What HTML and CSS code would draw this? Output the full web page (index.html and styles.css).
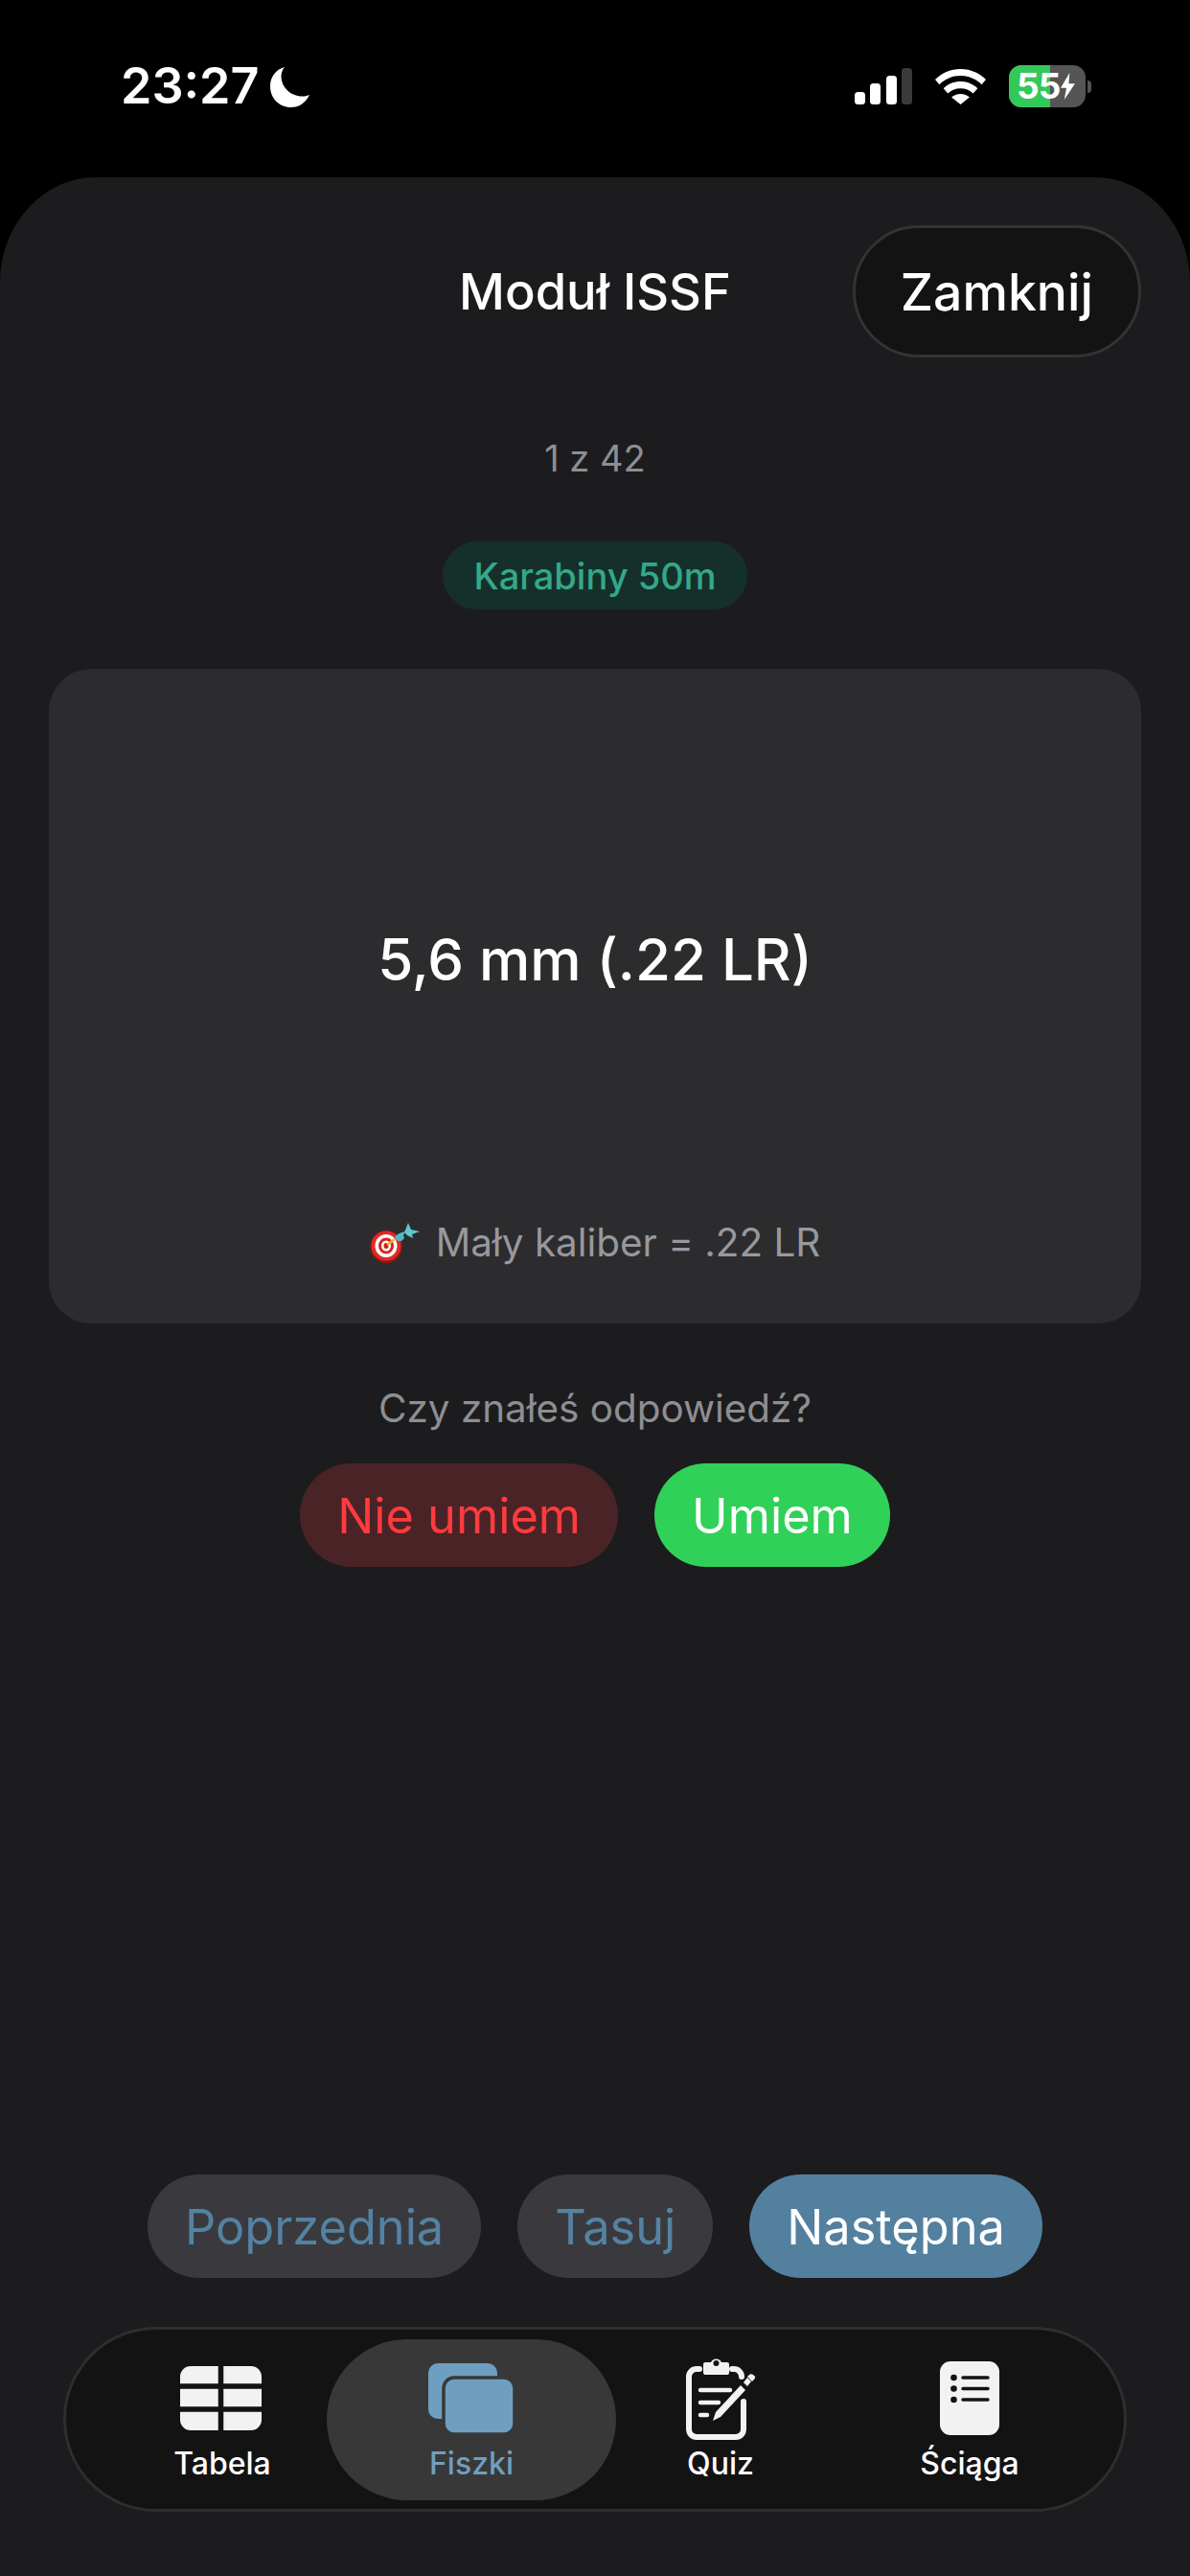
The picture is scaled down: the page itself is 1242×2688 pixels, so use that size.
FILE: index.html
```html
<!DOCTYPE html>
<html lang="pl">
<head>
    <meta charset="UTF-8">
    <title>Moduł ISSF</title>
    <link rel="stylesheet" href="styles.css">
</head>
<body>
    <div class="status-bar">
        <div class="status-left">
            <span class="time">23:27</span>
            <svg class="moon" viewBox="0 0 41 42"><path fill="#fff" d="M15 0C5.500 2.500 0 10.500 0 20c0 12.500 9.500 22 21.500 22 8.500 0 15.500-4.500 19.500-13-1.500.8-4.500 1.500-7.500 1.500C21.500 30.500 11.500 21 11.500 9.500c0-3.500 1.300-7 3.500-9.500z"/></svg>
        </div>
        <div class="status-right">
            <svg class="signal" viewBox="0 0 60 38">
                <rect x="0" y="25" width="11" height="13" rx="3.500" fill="#fff"/>
                <rect x="16" y="16" width="11" height="22" rx="3.500" fill="#fff"/>
                <rect x="33" y="8" width="11" height="30" rx="3.500" fill="#fff"/>
                <rect x="49" y="0" width="11" height="38" rx="3.500" fill="#3a3a3a"/>
            </svg>
            <svg class="wifi" viewBox="0 0 53 37">
                <path fill="#fff" d="M26.500 0C16.500 0 7.500 3.800 0 11l4.500 5.200C10.500 10.300 18 7 26.500 7s16 3.300 22 9.200L53 11C45.500 3.800 36.500 0 26.500 0z"/>
                <path fill="#fff" d="M26.500 13c-6.800 0-12.800 2.500-17.800 7.200l4.600 5.300c3.600-3.400 8.200-5.300 13.200-5.300s9.600 1.900 13.200 5.300l4.600-5.300C39.300 15.500 33.300 13 26.500 13z"/>
                <path fill="#fff" d="M26.500 26c-3.700 0-6.800 1.200-9.400 3.600L26.500 37l9.400-7.400C33.300 27.200 30.200 26 26.500 26z"/>
            </svg>
            <div class="battery">
                <div class="battery-fill"></div>
                <span class="battery-text">55</span>
                <svg class="bolt" viewBox="0 0 16 30"><path fill="#fff" d="M10 0L0 17h6.500L4 30l12-18H9z"/></svg>
            </div>
            <div class="battery-nub"></div>
        </div>
    </div>

    <div class="sheet">
        <div class="sheet-header">
            <div class="sheet-title">Moduł ISSF</div>
            <div class="close-btn">Zamknij</div>
        </div>

        <div class="counter">1 z 42</div>
        <div class="tag">Karabiny 50m</div>

        <div class="card">
            <div class="card-term">5,6 mm (.22 LR)</div>
            <div class="card-hint">
                <svg class="dart" viewBox="0 0 52 43">
                    <ellipse cx="17" cy="26" rx="16.500" ry="17" fill="#9c1512"/>
                    <ellipse cx="17" cy="25" rx="15.500" ry="15.500" fill="#e02a26"/>
                    <ellipse cx="17" cy="25" rx="11.500" ry="12" fill="#fff"/>
                    <ellipse cx="17" cy="25" rx="8" ry="8.500" fill="#d9231f"/>
                    <ellipse cx="17" cy="25" rx="5" ry="5.500" fill="#fff"/>
                    <ellipse cx="17" cy="25" rx="2.500" ry="3" fill="#c8201c"/>
                    <path d="M18 24l8-6" stroke="#e7b92e" stroke-width="2.500"/>
                    <path fill="#4fb8c6" d="M26 16c3-4 7-5 11-6l-2 4 1 3-3 3c-3 1-5 0-7-4z"/>
                    <path fill="#5fc7d3" d="M36 11l4-10 3 7 9 2-8 3 1 4-6-3z"/>
                </svg>
                <span>Mały kaliber = .22 LR</span>
            </div>
        </div>

        <div class="question">Czy znałeś odpowiedź?</div>
        <div class="answers">
            <div class="btn btn-no">Nie umiem</div>
            <div class="btn btn-yes">Umiem</div>
        </div>

        <div class="nav-btns">
            <div class="btn btn-muted">Poprzednia</div>
            <div class="btn btn-muted">Tasuj</div>
            <div class="btn btn-next">Następna</div>
        </div>

        <div class="tab-bar">
            <div class="tab">
                <div class="tab-icon tab-icon-table">
                    <svg width="85" height="67" viewBox="0 0 85 67">
                        <rect width="85" height="67" rx="11" fill="#f2f2f2"/>
                        <path d="M42.500 0V67M0 21H85M0 45H85" stroke="#131314" stroke-width="5.500"/>
                    </svg>
                </div>
                <span class="tab-label">Tabela</span>
            </div>
            <div class="tab tab-active">
                <div class="tab-icon">
                    <svg width="90" height="74" viewBox="0 0 90 74">
                        <rect x="0" y="0" width="72" height="58" rx="10" fill="#6f9fc0"/>
                        <rect x="16" y="15" width="74" height="59" rx="11" fill="#6f9fc0" stroke="#383838" stroke-width="3.500"/>
                    </svg>
                </div>
                <span class="tab-label">Fiszki</span>
            </div>
            <div class="tab">
                <div class="tab-icon">
                    <svg width="73" height="87" viewBox="0 0 73 87">
                        <path fill="none" stroke="#f2f2f2" stroke-width="6" stroke-linecap="round" d="M14 13H11a8 8 0 0 0-8 8V76a8 8 0 0 0 8 8H52a8 8 0 0 0 8-8V47M48 13H50a8 8 0 0 1 8 8"/>
                        <path fill="#f2f2f2" d="M18 8a2 2 0 0 1 2-2h6a6 6 0 0 1 11 0h6a2 2 0 0 1 2 2v9a2 2 0 0 1-2 2H20a2 2 0 0 1-2-2z"/>
                        <circle cx="31.500" cy="7" r="3" fill="#131314"/>
                        <path fill="none" stroke="#f2f2f2" stroke-width="4.500" stroke-linecap="round" d="M15 35H46M15 48H34M15 61H22"/>
                        <path fill="none" stroke="#131314" stroke-width="10" d="M30 63L64 27"/>
                        <path fill="#f2f2f2" d="M28 67l3-9 26-28 5 5-26 28zM60 27l4-5 4 4-4 5zM64 21l2-2c2-2 5 0 6 2 .5 1 0 2-1 3l-2 2z"/>
                    </svg>
                </div>
                <span class="tab-label">Quiz</span>
            </div>
            <div class="tab tab-last">
                <div class="tab-icon">
                    <svg width="62" height="77" viewBox="0 0 62 77">
                        <rect width="62" height="77" rx="11" fill="#f2f2f2"/>
                        <circle cx="14.500" cy="17" r="3.300" fill="#131314"/>
                        <circle cx="14.500" cy="28.500" r="3.300" fill="#131314"/>
                        <circle cx="14.500" cy="40" r="3.300" fill="#131314"/>
                        <path d="M24 17H50M24 28.500H50M24 40H50" stroke="#131314" stroke-width="3.500" stroke-linecap="round"/>
                    </svg>
                </div>
                <span class="tab-label">Ściąga</span>
            </div>
        </div>
    </div>
</body>
</html>
```

FILE: styles.css
```css
* {
    box-sizing: border-box;
}

body {
    margin: 0;
    width: 1242px;
    height: 2688px;
    overflow: hidden;
    background-color: #000;
    color: #fff;
    font-family: Inter, "Liberation Sans", sans-serif;
    display: flex;
    flex-direction: column;
}

/* status bar */
.status-bar {
    height: 185px;
    flex-shrink: 0;
    display: flex;
    justify-content: space-between;
    padding: 68px 103px 0 126px;
}

.status-left {
    display: flex;
    align-items: flex-start;
    gap: 12px;
}

.time {
    font-size: 52px;
    font-weight: 600;
    line-height: 44px;
}

.moon {
    width: 41px;
    height: 42px;
    margin-top: 2px;
}

.status-right {
    display: flex;
    align-items: flex-start;
}

.signal {
    width: 60px;
    height: 38px;
    margin-top: 3px;
}

.wifi {
    width: 53px;
    height: 37px;
    margin: 4px 24px 0 24px;
}

.battery {
    position: relative;
    width: 80px;
    height: 44px;
    border-radius: 13px;
    overflow: hidden;
    background-color: #555;
    display: flex;
    align-items: center;
}

.battery-fill {
    position: absolute;
    left: 0;
    top: 0;
    bottom: 0;
    width: 43px;
    background-color: #34c759;
}

.battery-text {
    position: relative;
    font-size: 37px;
    font-weight: 700;
    line-height: 44px;
    margin-left: 8px;
    letter-spacing: -1px;
}

.bolt {
    position: relative;
    width: 15px;
    height: 28px;
    margin-left: 1px;
}

.battery-nub {
    width: 4px;
    height: 13px;
    margin: 16px 0 0 2px;
    border-radius: 0 4px 4px 0;
    background-color: #555;
}

/* sheet */
.sheet {
    flex: 1;
    display: flex;
    flex-direction: column;
    align-items: center;
    background-color: #1c1c1e;
    border-radius: 100px 100px 0 0 / 110px 110px 0 0;
    padding: 50px 51px 67px 51px;
}

.sheet-header {
    width: 100%;
    display: grid;
    grid-template-columns: 1fr auto 1fr;
    align-items: center;
}

.sheet-title {
    grid-column: 2;
    font-size: 52.500px;
    font-weight: 550;
}

.close-btn {
    grid-column: 3;
    justify-self: end;
    height: 138px;
    padding: 0 47px;
    display: flex;
    align-items: center;
    font-size: 53.500px;
    font-weight: 500;
    background-color: #131314;
    border: 3px solid #333335;
    border-radius: 69px;
}

.counter {
    margin-top: 80px;
    font-size: 38px;
    line-height: 50px;
    color: #8e8e93;
}

.tag {
    margin-top: 62px;
    height: 71px;
    padding: 0 33px;
    display: flex;
    align-items: center;
    font-size: 38px;
    font-weight: 500;
    color: #34a888;
    background-color: #15302b;
    border-radius: 36px;
}

.card {
    width: 1140px;
    height: 683px;
    margin-top: 62px;
    padding: 0 20px 60px;
    display: flex;
    flex-direction: column;
    align-items: center;
    background-color: #2c2c2e;
    border-radius: 44px;
}

.card-term {
    margin-top: 265px;
    font-size: 60px;
    font-weight: 500;
    line-height: 76px;
}

.card-hint {
    margin-top: auto;
    display: flex;
    align-items: center;
    gap: 17px;
    font-size: 40.400px;
    color: #98989d;
}

.dart {
    width: 52px;
    height: 43px;
}

.question {
    margin-top: 62px;
    font-size: 40.400px;
    line-height: 54px;
    color: #8e8e93;
}

.answers,
.nav-btns {
    display: flex;
    justify-content: center;
    gap: 38px;
}

.answers {
    margin-top: 30px;
}

.btn {
    height: 108px;
    padding: 0 39px;
    display: flex;
    align-items: center;
    font-size: 50.500px;
    border-radius: 54px;
}

.btn-no {
    color: #ff3b3f;
    background-color: #4a2326;
}

.btn-yes {
    background-color: #30d158;
}

.nav-btns {
    margin-top: auto;
}

.btn-muted {
    color: #5482a3;
    background-color: #3a3a3e;
}

.btn-next {
    background-color: #53809f;
}

/* tab bar */
.tab-bar {
    width: 1110px;
    height: 193px;
    margin-top: 51px;
    padding: 0 0 0 54px;
    display: flex;
    align-items: center;
    background-color: #131314;
    border: 3px solid #2e2e30;
    border-radius: 97px;
}

.tab {
    width: 218px;
    height: 168px;
    display: flex;
    flex-direction: column;
    align-items: center;
    padding-top: 17px;
    border-radius: 84px;
}

.tab-active {
    width: 302px;
    background-color: #383838;
    color: #6f9fc0;
}

.tab-last {
    margin-left: 42px;
}

.tab-icon {
    height: 90px;
    display: flex;
    align-items: center;
    justify-content: center;
}

.tab-icon-table {
    margin-right: 4px;
}

.tab-label {
    margin-top: 5px;
    font-size: 32px;
    font-weight: 500;
    line-height: 36px;
}
```
